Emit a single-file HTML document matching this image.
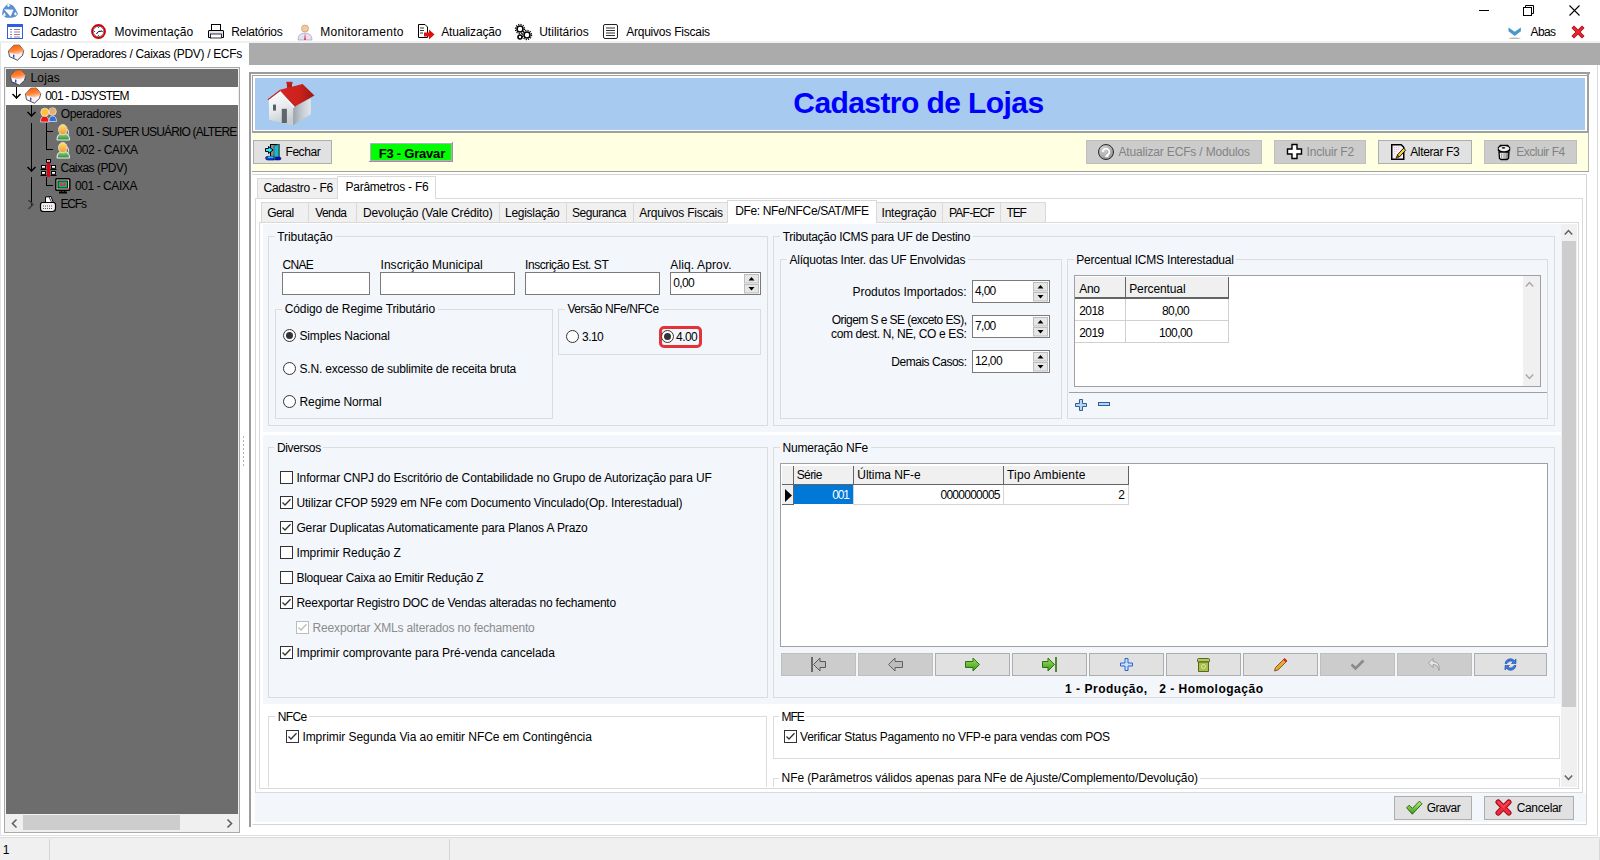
<!DOCTYPE html>
<html><head><meta charset="utf-8"><title>DJMonitor</title><style>
*{box-sizing:border-box}
html,body{margin:0;padding:0;width:1600px;height:860px;overflow:hidden;background:#fff;font-family:'Liberation Sans',sans-serif;font-size:12px;color:#000}
.a{position:absolute}
.t{position:absolute;white-space:pre;line-height:15px;font-size:12px;color:#000}
svg.a{overflow:visible}
</style></head><body>
<svg class="a" style="left:0px;top:0px" width="22" height="22" viewBox="0 0 22 22"><path d="M3 9 L6 5.5 L8 3.5 L13 5.5 L15.5 9 L18 14 L16 16.5 L12 17.8 L6 17.8 L2 14.5Z" fill="#5A90D2"/><path d="M4 9.2 L13.5 9.8 L10.5 16.5Z" fill="#fff"/><path d="M3 14.5 L4.5 12.5 L6 15.5 L3.5 16Z" fill="#fff"/><path d="M14 13.5 L15.5 12 L17 14.5 L15 15.5Z" fill="#fff"/><path d="M7 5 L8.5 3.2 L10 6 L8 7Z" fill="#fff"/></svg>
<div class="t" style="left:23.5px;top:5px;letter-spacing:0.035px;">DJMonitor</div>
<div class="a" style="left:1479px;top:10px;width:10px;height:1px;background:#000;"></div>
<svg class="a" style="left:1523px;top:5px" width="11" height="11" viewBox="0 0 11 11"><rect x="0.5" y="2.5" width="8" height="8" fill="none" stroke="#000"/><path d="M2.5 2.5 V0.5 H10.5 V8.5 H8.5" fill="none" stroke="#000"/></svg>
<svg class="a" style="left:1569px;top:5px" width="11" height="11" viewBox="0 0 11 11"><path d="M0.5 0.5 L10.5 10.5 M10.5 0.5 L0.5 10.5" stroke="#000" stroke-width="1.1"/></svg>
<svg class="a" style="left:7px;top:24px" width="16" height="15" viewBox="0 0 16 15"><rect x="0.5" y="0.5" width="15" height="14" fill="#fff" stroke="#2F5FE0"/><rect x="0.5" y="0.5" width="15" height="2.5" fill="#2F5FE0"/><path d="M3 5.5H5 M7 5.5H13 M3 8H5 M7 8H13 M3 10.5H5 M7 10.5H13 M3 13H5 M7 13H13" stroke="#8E7EA8" stroke-width="1"/></svg>
<div class="t" style="left:30.5px;top:25px;letter-spacing:-0.338px;">Cadastro</div>
<svg class="a" style="left:91px;top:24px" width="15" height="15" viewBox="0 0 15 15"><circle cx="7.5" cy="7.5" r="6.5" fill="#fff" stroke="#D40000" stroke-width="1.8"/><circle cx="7.5" cy="7.5" r="5.2" fill="none" stroke="#000" stroke-width="0.5"/><path d="M7.5 7.5 L11 7 M7.5 7.5 L5.5 10" stroke="#000" stroke-width="1"/><circle cx="7.5" cy="3.5" r="0.6" fill="#23F"/><circle cx="11.5" cy="7.5" r="0.6" fill="#23F"/><circle cx="3.5" cy="7.5" r="0.6" fill="#23F"/><circle cx="7.5" cy="11.5" r="0.6" fill="#23F"/></svg>
<div class="t" style="left:114.4px;top:25px;letter-spacing:0.079px;">Movimentação</div>
<svg class="a" style="left:208px;top:24px" width="16" height="15" viewBox="0 0 16 15"><rect x="3.5" y="0.5" width="9" height="6" fill="#fff" stroke="#000"/><path d="M1 6.5 H15 Q15.5 6.5 15.5 7 V13.5 H0.5 V7 Q0.5 6.5 1 6.5Z" fill="#E6E6F0" stroke="#000"/><rect x="2.5" y="10" width="11" height="4" fill="#fff" stroke="#000" stroke-width="0.8"/></svg>
<div class="t" style="left:231.2px;top:25px;letter-spacing:-0.273px;">Relatórios</div>
<svg class="a" style="left:297px;top:24px" width="16" height="16" viewBox="0 0 16 16"><circle cx="8" cy="4.5" r="3.5" fill="#F3C9A0" stroke="#B07850" stroke-width="0.5"/><path d="M1 16 Q1 9 8 9 Q15 9 15 16Z" fill="#E6E0F0" stroke="#A090B8" stroke-width="0.6"/><path d="M8 9 L7 16 L9 16Z" fill="#E04060"/></svg>
<div class="t" style="left:320.2px;top:25px;letter-spacing:0.266px;">Monitoramento</div>
<svg class="a" style="left:418px;top:24px" width="17" height="16" viewBox="0 0 17 16"><path d="M0.5 0.5 H7 L9.5 3 V13.5 H0.5Z" fill="#fff" stroke="#000"/><path d="M2 4H6 M2 6.5H6 M2 9H5" stroke="#000" stroke-width="0.8"/><path d="M6 8.5 H11 V5.5 L16.5 10.5 L11 15.5 V12.5 H6Z" fill="#E01010"/></svg>
<div class="t" style="left:441.2px;top:25px;letter-spacing:-0.186px;">Atualização</div>
<svg class="a" style="left:515px;top:24px" width="17" height="16" viewBox="0 0 17 16"><g fill="none" stroke="#000" stroke-width="1.6"><circle cx="5" cy="5" r="3"/><circle cx="12" cy="11" r="3"/><circle cx="5" cy="13" r="2"/></g><g stroke="#000" stroke-width="1.2" stroke-dasharray="1.2 1.2" fill="none"><circle cx="5" cy="5" r="4.6"/><circle cx="12" cy="11" r="4.6"/></g></svg>
<div class="t" style="left:539.2px;top:25px;letter-spacing:0.014px;">Utilitários</div>
<svg class="a" style="left:603px;top:24px" width="16" height="15" viewBox="0 0 16 15"><rect x="0.5" y="0.5" width="14" height="14" rx="1.5" fill="#fff" stroke="#222"/><path d="M3 4H12 M3 6.5H12 M3 9H12 M3 11.5H12" stroke="#333" stroke-width="1"/></svg>
<div class="t" style="left:626.2px;top:25px;letter-spacing:-0.229px;">Arquivos Fiscais</div>
<svg class="a" style="left:1508px;top:27px" width="14" height="13" viewBox="0 0 14 13"><path d="M0.5 0.5 L6.7 4.7 L12.9 0.5 V4.2 L6.7 9 L0.5 4.2Z" fill="#4898C8"/><ellipse cx="6.7" cy="11.3" rx="6" ry="0.8" fill="#B8B8B8"/></svg>
<div class="t" style="left:1530.5px;top:25px;letter-spacing:-0.590px;">Abas</div>
<svg class="a" style="left:1572px;top:26px" width="12" height="12" viewBox="0 0 12 12"><path d="M2 2 L10 10 M10 2 L2 10" stroke="#A00818" stroke-width="3.6" stroke-linecap="square"/><path d="M2 2 L10 10 M10 2 L2 10" stroke="#E82430" stroke-width="2.4" stroke-linecap="square"/></svg>
<div class="a" style="left:0px;top:41px;width:1600px;height:2px;background:#F0F0F0;"></div>
<div class="a" style="left:249px;top:43px;width:1351px;height:22px;background:#ABABAB;"></div>
<svg class="a" style="left:8px;top:44px" width="16" height="16" viewBox="0 0 16 16"><defs><linearGradient id="hr" x1="0.3" y1="0" x2="0.6" y2="1"><stop offset="0" stop-color="#FF5A00"/><stop offset="0.6" stop-color="#FF8A40"/><stop offset="1" stop-color="#FFD8C8"/></linearGradient></defs><path d="M0.5 7 L5.8 1.3 L11.4 1.1 L15.7 6.6 L14.5 11.4 L9.4 16.2 L1.5 12.6Z" fill="#FCF4FC" stroke="#3A3A3A" stroke-width="0.9"/><path d="M0.6 7 L5.8 1.4 L11.4 1.2 L15.6 6.6 L14.8 8.2 L10 10.5 L3.5 9.2 L1 8.2Z" fill="url(#hr)"/><rect x="5" y="10.6" width="1.4" height="3.2" rx="0.6" fill="#1A50D0"/></svg>
<div class="t" style="left:30.5px;top:47px;letter-spacing:-0.336px;">Lojas / Operadores / Caixas (PDV) / ECFs</div>
<div class="a" style="left:0px;top:43px;width:1px;height:793px;background:#E3E3E3;"></div>
<div class="a" style="left:4px;top:67px;width:236px;height:766px;background:#F0F0F0;border:1px solid #A8A8A8;"></div>
<div class="a" style="left:6px;top:69px;width:232px;height:745px;background:#6D6D6D;"></div>
<div class="a" style="left:6px;top:87px;width:232px;height:18px;background:#FFFFFF;"></div>
<div class="a" style="left:23px;top:815px;width:157px;height:15px;background:#CDCDCD;"></div>
<svg class="a" style="left:11px;top:819px" width="7" height="9" viewBox="0 0 7 9"><path d="M5.5 0.5 L1.5 4.5 L5.5 8.5" fill="none" stroke="#606060" stroke-width="1.6"/></svg>
<svg class="a" style="left:226px;top:819px" width="7" height="9" viewBox="0 0 7 9"><path d="M1.5 0.5 L5.5 4.5 L1.5 8.5" fill="none" stroke="#606060" stroke-width="1.6"/></svg>
<div class="a" style="left:243px;top:436px;width:1px;height:2px;background:#B0B0B0;"></div>
<div class="a" style="left:243px;top:440px;width:1px;height:2px;background:#B0B0B0;"></div>
<div class="a" style="left:243px;top:444px;width:1px;height:2px;background:#B0B0B0;"></div>
<div class="a" style="left:243px;top:448px;width:1px;height:2px;background:#B0B0B0;"></div>
<div class="a" style="left:243px;top:452px;width:1px;height:2px;background:#B0B0B0;"></div>
<div class="a" style="left:243px;top:456px;width:1px;height:2px;background:#B0B0B0;"></div>
<div class="a" style="left:243px;top:460px;width:1px;height:2px;background:#B0B0B0;"></div>
<div class="a" style="left:243px;top:464px;width:1px;height:2px;background:#B0B0B0;"></div>
<div class="a" style="left:16px;top:87px;width:1px;height:12px;background:#000;"></div>
<svg class="a" style="left:11px;top:87px" width="11" height="13" viewBox="0 0 11 13"><path d="M1.5 7 L5.5 11 L9.5 7" fill="none" stroke="#000" stroke-width="1.5"/></svg>
<div class="a" style="left:31px;top:105px;width:1px;height:12px;background:#000;"></div>
<svg class="a" style="left:26px;top:105px" width="11" height="13" viewBox="0 0 11 13"><path d="M1.5 7 L5.5 11 L9.5 7" fill="none" stroke="#000" stroke-width="1.5"/></svg>
<div class="a" style="left:31px;top:123px;width:1px;height:37px;background:#000;"></div>
<div class="a" style="left:31px;top:160px;width:1px;height:12px;background:#000;"></div>
<svg class="a" style="left:26px;top:160px" width="11" height="13" viewBox="0 0 11 13"><path d="M1.5 7 L5.5 11 L9.5 7" fill="none" stroke="#000" stroke-width="1.5"/></svg>
<div class="a" style="left:31px;top:177px;width:1px;height:29px;background:#000;"></div>
<svg class="a" style="left:27px;top:199px" width="8" height="11" viewBox="0 0 8 11"><path d="M1.5 1 L6 5.5 L1.5 10" fill="none" stroke="#3C3C3C" stroke-width="1.5"/></svg>
<div class="a" style="left:46px;top:123px;width:1px;height:27px;background:#000;"></div>
<div class="a" style="left:46px;top:131px;width:7px;height:1px;background:#000;"></div>
<div class="a" style="left:46px;top:149px;width:7px;height:1px;background:#000;"></div>
<div class="a" style="left:46px;top:177px;width:1px;height:9px;background:#000;"></div>
<div class="a" style="left:46px;top:185px;width:7px;height:1px;background:#000;"></div>
<svg class="a" style="left:10px;top:69px" width="16" height="16" viewBox="0 0 16 16"><defs><linearGradient id="hr" x1="0.3" y1="0" x2="0.6" y2="1"><stop offset="0" stop-color="#FF5A00"/><stop offset="0.6" stop-color="#FF8A40"/><stop offset="1" stop-color="#FFD8C8"/></linearGradient></defs><path d="M0.5 7 L5.8 1.3 L11.4 1.1 L15.7 6.6 L14.5 11.4 L9.4 16.2 L1.5 12.6Z" fill="#FCF4FC" stroke="#3A3A3A" stroke-width="0.9"/><path d="M0.6 7 L5.8 1.4 L11.4 1.2 L15.6 6.6 L14.8 8.2 L10 10.5 L3.5 9.2 L1 8.2Z" fill="url(#hr)"/><rect x="5" y="10.6" width="1.4" height="3.2" rx="0.6" fill="#1A50D0"/></svg>
<div class="t" style="left:30.5px;top:71px;letter-spacing:0.163px;">Lojas</div>
<svg class="a" style="left:25px;top:87px" width="16" height="16" viewBox="0 0 16 16"><defs><linearGradient id="hr" x1="0.3" y1="0" x2="0.6" y2="1"><stop offset="0" stop-color="#FF5A00"/><stop offset="0.6" stop-color="#FF8A40"/><stop offset="1" stop-color="#FFD8C8"/></linearGradient></defs><path d="M0.5 7 L5.8 1.3 L11.4 1.1 L15.7 6.6 L14.5 11.4 L9.4 16.2 L1.5 12.6Z" fill="#FCF4FC" stroke="#3A3A3A" stroke-width="0.9"/><path d="M0.6 7 L5.8 1.4 L11.4 1.2 L15.6 6.6 L14.8 8.2 L10 10.5 L3.5 9.2 L1 8.2Z" fill="url(#hr)"/><rect x="5" y="10.6" width="1.4" height="3.2" rx="0.6" fill="#1A50D0"/></svg>
<div class="t" style="left:45.2px;top:89px;letter-spacing:-0.800px;">001 - DJSYSTEM</div>
<svg class="a" style="left:40px;top:106px" width="17" height="16" viewBox="0 0 17 16"><path d="M9 15.5 Q9 10 12.5 10 Q16.5 10 16.5 15.5Z" fill="#3070E0" stroke="#fff" stroke-width="0.6"/><circle cx="12.5" cy="5.5" r="3.8" fill="#E8B070" stroke="#fff" stroke-width="0.6"/><path d="M9 4 Q12.5 0.5 16 4 L15 3 Q12.5 2 10 3.5Z" fill="#8A5A30"/><path d="M0.5 16 Q0.5 10 4.5 10 Q8.8 10 8.8 16Z" fill="#E81818" stroke="#fff" stroke-width="0.6"/><circle cx="4.8" cy="6.2" r="4" fill="#FFC040" stroke="#fff" stroke-width="0.6"/><path d="M1 4.8 Q4.8 1.2 8.6 4.8 Q4.8 3.2 1 4.8Z" fill="#F0D030"/></svg>
<div class="t" style="left:60.7px;top:107px;letter-spacing:-0.287px;">Operadores</div>
<svg class="a" style="left:56px;top:124px" width="15" height="17" viewBox="0 0 15 17"><defs><linearGradient id="uh" x1="0" y1="0" x2="0" y2="1"><stop offset="0" stop-color="#FFE070"/><stop offset="1" stop-color="#F09A30"/></linearGradient><linearGradient id="ub" x1="0" y1="0" x2="0" y2="1"><stop offset="0" stop-color="#9AD890"/><stop offset="1" stop-color="#2A8A30"/></linearGradient></defs><path d="M1 16 Q1 9.5 6 9.5 H8 Q13.5 9.5 13.5 16Z" fill="url(#ub)" stroke="#FFFFFF" stroke-width="0.9"/><ellipse cx="6.8" cy="5.6" rx="4.3" ry="5.2" fill="url(#uh)" stroke="#FFFFFF" stroke-width="0.6"/><path d="M11.5 5 Q13.5 8 12 11" fill="none" stroke="#FFFFFF" stroke-width="0.8"/></svg>
<div class="t" style="left:76.0px;top:125px;letter-spacing:-0.840px;width:162px;overflow:hidden;">001 - SUPER USUÁRIO (ALTERE</div>
<svg class="a" style="left:56px;top:142px" width="15" height="17" viewBox="0 0 15 17"><defs><linearGradient id="uh" x1="0" y1="0" x2="0" y2="1"><stop offset="0" stop-color="#FFE070"/><stop offset="1" stop-color="#F09A30"/></linearGradient><linearGradient id="ub" x1="0" y1="0" x2="0" y2="1"><stop offset="0" stop-color="#9AD890"/><stop offset="1" stop-color="#2A8A30"/></linearGradient></defs><path d="M1 16 Q1 9.5 6 9.5 H8 Q13.5 9.5 13.5 16Z" fill="url(#ub)" stroke="#FFFFFF" stroke-width="0.9"/><ellipse cx="6.8" cy="5.6" rx="4.3" ry="5.2" fill="url(#uh)" stroke="#FFFFFF" stroke-width="0.6"/><path d="M11.5 5 Q13.5 8 12 11" fill="none" stroke="#FFFFFF" stroke-width="0.8"/></svg>
<div class="t" style="left:75.5px;top:143px;letter-spacing:-0.409px;">002 - CAIXA</div>
<svg class="a" style="left:40px;top:159px" width="17" height="19" viewBox="0 0 17 19"><rect x="7" y="4" width="3" height="14" fill="#E00010"/><path d="M5.5 7 L8.5 3.5 L11.5 7Z" fill="#E00010"/><g fill="#fff" stroke="#000" stroke-width="1"><rect x="6.5" y="0.5" width="4" height="2.8"/><rect x="1.5" y="6.5" width="4" height="2.8"/><rect x="11.5" y="6.5" width="4" height="2.8"/><rect x="1.5" y="12.5" width="4" height="2.8"/><rect x="11.5" y="12.5" width="4" height="2.8"/></g><path d="M0.5 10.5 H6.5 M10.5 10.5 H16.5 M0.5 16.5 H6.5 M10.5 16.5 H16.5" stroke="#000" stroke-width="1.2"/><rect x="7.5" y="1.2" width="2" height="1.4" fill="#D060C0"/></svg>
<div class="t" style="left:60.5px;top:161px;letter-spacing:-0.516px;">Caixas (PDV)</div>
<svg class="a" style="left:55px;top:178px" width="16" height="17" viewBox="0 0 16 17"><rect x="0.8" y="0.8" width="14" height="11.5" rx="1" fill="#D0D0D0" stroke="#000" stroke-width="1.4"/><rect x="3" y="3" width="9.5" height="7" fill="#10C040" stroke="#000" stroke-width="0.8"/><rect x="5" y="4.5" width="5.5" height="3.5" fill="#E020A0"/><rect x="6.5" y="5" width="2.5" height="1.5" fill="#10C040"/><rect x="12.5" y="10.5" width="1.5" height="1" fill="#F00"/><path d="M4 14.5 H12" stroke="#000" stroke-width="2"/><path d="M6.5 12.5 V14 M9.5 12.5 V14" stroke="#000" stroke-width="1"/></svg>
<div class="t" style="left:75.0px;top:179px;letter-spacing:-0.428px;">001 - CAIXA</div>
<svg class="a" style="left:40px;top:196px" width="16" height="16" viewBox="0 0 16 16"><path d="M5.5 7 L5.5 1 L11 0.5 L13.5 7Z" fill="#fff" stroke="#000" stroke-width="1"/><path d="M9 1 L12 7" stroke="#000" stroke-width="0.8"/><path d="M2.5 6.5 H13.5 Q15.5 6.5 15.5 9 V12.5 Q15.5 15.5 12.5 15.5 H3.5 Q0.5 15.5 0.5 12.5 V9 Q0.5 6.5 2.5 6.5Z" fill="#F4EEF4" stroke="#000" stroke-width="1.2"/><path d="M3 10 H13 M3 12.5 H13" stroke="#555" stroke-width="1" stroke-dasharray="1 1"/></svg>
<div class="t" style="left:60.5px;top:197px;letter-spacing:-1.200px;">ECFs</div>
<div class="a" style="left:0px;top:837px;width:1600px;height:1px;background:#DADADA;"></div>
<div class="a" style="left:0px;top:838px;width:1600px;height:22px;background:#F0F0F0;"></div>
<div class="a" style="left:1599px;top:839px;width:1px;height:21px;background:#D8D8D8;"></div>
<div class="a" style="left:49px;top:839px;width:1px;height:21px;background:#D5D5D5;"></div>
<div class="a" style="left:449px;top:839px;width:1px;height:21px;background:#D5D5D5;"></div>
<div class="t" style="left:2.8px;top:843px;letter-spacing:-0.188px;">1</div>
<div class="a" style="left:249px;top:72px;width:1341px;height:755px;background:#FFFFFF;"></div>
<div class="a" style="left:249px;top:72px;width:1341px;height:2px;background:#9C9C9C;"></div>
<div class="a" style="left:249px;top:72px;width:2px;height:755px;background:#9C9C9C;"></div>
<div class="a" style="left:1597px;top:65px;width:1px;height:771px;background:#DADADA;"></div>
<div class="a" style="left:0px;top:835px;width:1598px;height:1px;background:#E0E0E0;"></div>
<div class="a" style="left:252px;top:75px;width:1337px;height:1px;background:#A0A0A0;"></div>
<div class="a" style="left:252px;top:75px;width:1px;height:57px;background:#A0A0A0;"></div>
<div class="a" style="left:1587px;top:72px;width:2px;height:61px;background:#A0A0A0;"></div>
<div class="a" style="left:255px;top:78px;width:1330px;height:52px;background:#A6CAF0;"></div>
<div class="a" style="left:252px;top:131px;width:1337px;height:2px;background:#A0A0A0;"></div>
<svg class="a" style="left:260px;top:78px" width="65" height="52" viewBox="0 0 65 52"><defs><linearGradient id="hw" x1="0" y1="0" x2="0.3" y2="1"><stop offset="0" stop-color="#FFFFFF"/><stop offset="0.6" stop-color="#E8EAEC"/><stop offset="1" stop-color="#C9CDD1"/></linearGradient><linearGradient id="hs" x1="0" y1="0" x2="1" y2="0"><stop offset="0" stop-color="#9AA3AB"/><stop offset="0.5" stop-color="#C5CBD0"/><stop offset="1" stop-color="#E2E6E9"/></linearGradient><linearGradient id="hroof" x1="0" y1="0" x2="1" y2="0"><stop offset="0" stop-color="#D82420"/><stop offset="0.55" stop-color="#CC221C"/><stop offset="1" stop-color="#9C1814"/></linearGradient></defs><path d="M8.8 21.2 L20.3 12.7 L33.3 29 L33 47.2 L9.1 41.7Z" fill="url(#hw)"/><path d="M33.3 29 L50.8 20.6 L50.8 36.3 L33 47.2Z" fill="url(#hs)"/><rect x="26.9" y="3.9" width="5.1" height="6" fill="#B81C18"/><rect x="26.3" y="3.9" width="6.3" height="1.6" fill="#C82420"/><path d="M20 11.8 L42.6 6 L54.4 17.5 L35 28.4Z" fill="url(#hroof)"/><path d="M20 11.8 L7.3 21.5 L8.8 22 L20.3 13.2 L35 28.4 L35.5 28Z" fill="#C81E1A"/><path d="M20.3 13.2 L9 21.8 L9.3 23 L20.4 14.8 L33.6 30 L34.6 29Z" fill="#FFFFFF" opacity="0.85"/><rect x="13" y="26.6" width="3" height="6" fill="#5A6066"/><rect x="21.8" y="30.8" width="5.1" height="14.2" fill="#5E656B"/></svg>
<div class="t" style="left:793.3px;top:84px;font-size:30px;line-height:38px;font-weight:bold;color:#0000FF;letter-spacing:-0.581px;">Cadastro de Lojas</div>
<div class="a" style="left:253px;top:133px;width:1335px;height:38px;background:#FFFFE1;"></div>
<div class="a" style="left:1588px;top:133px;width:1px;height:39px;background:#B4B4B4;"></div>
<div class="a" style="left:252px;top:171px;width:1337px;height:1px;background:#A0A0A0;"></div>
<div class="a" style="left:253px;top:140px;width:79px;height:24px;background:#E1E1E1;border:1px solid #ADADAD;"></div>
<svg class="a" style="left:265px;top:144px" width="16" height="16" viewBox="0 0 16 16"><rect x="5.5" y="0.5" width="8.5" height="13.5" fill="#8E8A94" stroke="#000" stroke-width="1"/><path d="M9 2 L13.8 0.3 V14.5 L9 16Z" fill="#22B4C4" stroke="#0A5A60" stroke-width="0.7"/><path d="M0.5 4.5 H3.5 V2.5 L8 6 L3.5 9.5 V7.5 H0.5Z" fill="#10F0FF" stroke="#000" stroke-width="1"/><path d="M0.5 14 Q0.5 12.3 3 12.3 H9 V16 H3 Q0.5 16 0.5 14Z" fill="#1040F0" stroke="#000" stroke-width="0.6"/><path d="M3 12.5 H8.5 V13.8 H3Z" fill="#20E0FF"/><path d="M10.5 13 H14 Q16 13 16 14.5 Q16 16 14 16 H10.5Z" fill="#0010E0" stroke="#000" stroke-width="0.5"/></svg>
<div class="t" style="left:285.5px;top:145px;letter-spacing:-0.443px;">Fechar</div>
<div class="a" style="left:369px;top:142px;width:84px;height:20px;background:#9A929A;"></div>
<div class="a" style="left:369px;top:142px;width:83px;height:19px;background:#FFFFFF;"></div>
<div class="a" style="left:370px;top:143px;width:82px;height:18px;background:#B8AAB8;"></div>
<div class="a" style="left:371px;top:144px;width:80px;height:16px;background:#00FF00;"></div>
<div class="t" style="left:378.7px;top:146px;font-size:13px;line-height:16px;font-weight:bold;letter-spacing:-0.214px;">F3 - Gravar</div>
<div class="a" style="left:1086px;top:140px;width:176px;height:24px;background:#CCCCCC;border:1px solid #BFBFBF;"></div>
<svg class="a" style="left:1098px;top:144px" width="16" height="16" viewBox="0 0 16 16"><defs><radialGradient id="rg" cx="0.35" cy="0.3" r="0.8"><stop offset="0" stop-color="#D8D8D8"/><stop offset="1" stop-color="#8E8E8E"/></radialGradient></defs><circle cx="8" cy="8" r="7.5" fill="url(#rg)" stroke="#2A2A2A" stroke-width="1"/><path d="M4.8 8 A3.3 3.3 0 1 1 9.5 11" fill="none" stroke="#fff" stroke-width="1.6"/><path d="M10.2 9 L6.5 12.5 L10.5 13.5Z" fill="#fff"/></svg>
<div class="t" style="left:1118.5px;top:145px;color:#838383;letter-spacing:-0.170px;">Atualizar ECFs / Modulos</div>
<div class="a" style="left:1274px;top:140px;width:92px;height:24px;background:#CCCCCC;border:1px solid #BFBFBF;"></div>
<svg class="a" style="left:1287px;top:144px" width="15" height="15" viewBox="0 0 15 15"><path d="M5 0.5 H10 V5 H14.5 V10 H10 V14.5 H5 V10 H0.5 V5 H5Z" fill="#fff" stroke="#000" stroke-width="1.4"/></svg>
<div class="t" style="left:1306.5px;top:145px;color:#838383;letter-spacing:-0.186px;">Incluir F2</div>
<div class="a" style="left:1378px;top:140px;width:94px;height:24px;background:#E1E1E1;border:1px solid #ADADAD;"></div>
<svg class="a" style="left:1391px;top:144px" width="16" height="16" viewBox="0 0 16 16"><path d="M0.75 0.75 H10.2 L12.75 3.3 V15.25 H0.75Z" fill="#F8EEF8" stroke="#000" stroke-width="1.5"/><path d="M3 3.5 H8 M3 5.5 H8 M3 7.5 H7 M3 9.5 H5" stroke="#C8C0C8" stroke-width="0.8" stroke-dasharray="1 1"/><path d="M6.3 11 L12.6 4.2 L14.6 6.2 L8.3 13Z" fill="#F8D830" stroke="#000" stroke-width="0.9"/><path d="M6.3 11 L5 14.2 L8.3 13Z" fill="#B07020" stroke="#000" stroke-width="0.6"/></svg>
<div class="t" style="left:1410.2px;top:145px;letter-spacing:-0.349px;">Alterar F3</div>
<div class="a" style="left:1484px;top:140px;width:93px;height:24px;background:#CCCCCC;border:1px solid #BFBFBF;"></div>
<svg class="a" style="left:1497px;top:144px" width="14" height="16" viewBox="0 0 14 16"><defs><linearGradient id="tg" x1="0" y1="0" x2="1" y2="0"><stop offset="0" stop-color="#F4F4F4"/><stop offset="0.5" stop-color="#D8D8D8"/><stop offset="1" stop-color="#707070"/></linearGradient></defs><path d="M2 8 L2.5 14.5 L4 15.5 H10 L11.5 14.5 L12 8Z" fill="url(#tg)" stroke="#000" stroke-width="1.3"/><path d="M4.5 9.5 V14 M7 9.5 V14.5 M9.5 9.5 V14" stroke="#8A8A8A" stroke-width="0.8"/><path d="M0.8 3.5 L3 0.8 H11 L13.2 3.5 V6.8 L11 8 H3 L0.8 6.8Z" fill="#000"/><ellipse cx="7" cy="4.6" rx="5.3" ry="2.6" fill="#EDEDED"/><ellipse cx="6.5" cy="3.8" rx="1.8" ry="0.9" fill="#222"/></svg>
<div class="t" style="left:1516.3px;top:145px;color:#838383;letter-spacing:-0.494px;">Excluir F4</div>
<div class="a" style="left:252px;top:174px;width:1335px;height:651px;background:#FFFFFF;border:1px solid #D4D4D4;border-left-color:#FFFFFF;"></div>
<div class="a" style="left:255px;top:198px;width:1328px;height:595px;background:#FFFFFF;border:1px solid #D9D9D9;"></div>
<div class="a" style="left:257px;top:178px;width:81px;height:21px;background:#F0F0F0;border:1px solid #D9D9D9;"></div>
<div class="a" style="left:337px;top:176px;width:99px;height:23px;background:#FFFFFF;border:1px solid #D9D9D9;border-bottom:none;"></div>
<div class="t" style="left:263.6px;top:181px;letter-spacing:-0.312px;">Cadastro - F6</div>
<div class="t" style="left:345.5px;top:180px;letter-spacing:-0.254px;">Parâmetros - F6</div>
<div class="a" style="left:259px;top:222px;width:1320px;height:567px;background:#FFFFFF;border:1px solid #D9D9D9;"></div>
<div class="a" style="left:261px;top:202px;width:48px;height:21px;background:#F0F0F0;border:1px solid #D9D9D9;"></div>
<div class="t" style="left:267.3px;top:206px;letter-spacing:-0.649px;">Geral</div>
<div class="a" style="left:308px;top:202px;width:49px;height:21px;background:#F0F0F0;border:1px solid #D9D9D9;"></div>
<div class="t" style="left:315.2px;top:206px;letter-spacing:-0.569px;">Venda</div>
<div class="a" style="left:356px;top:202px;width:144px;height:21px;background:#F0F0F0;border:1px solid #D9D9D9;"></div>
<div class="t" style="left:363.0px;top:206px;letter-spacing:-0.153px;">Devolução (Vale Crédito)</div>
<div class="a" style="left:499px;top:202px;width:68px;height:21px;background:#F0F0F0;border:1px solid #D9D9D9;"></div>
<div class="t" style="left:505.0px;top:206px;letter-spacing:-0.287px;">Legislação</div>
<div class="a" style="left:566px;top:202px;width:68px;height:21px;background:#F0F0F0;border:1px solid #D9D9D9;"></div>
<div class="t" style="left:572.0px;top:206px;letter-spacing:-0.450px;">Seguranca</div>
<div class="a" style="left:633px;top:202px;width:96px;height:21px;background:#F0F0F0;border:1px solid #D9D9D9;"></div>
<div class="t" style="left:639.3px;top:206px;letter-spacing:-0.241px;">Arquivos Fiscais</div>
<div class="a" style="left:876px;top:202px;width:67px;height:21px;background:#F0F0F0;border:1px solid #D9D9D9;"></div>
<div class="t" style="left:881.5px;top:206px;letter-spacing:-0.192px;">Integração</div>
<div class="a" style="left:942px;top:202px;width:59px;height:21px;background:#F0F0F0;border:1px solid #D9D9D9;"></div>
<div class="t" style="left:949.0px;top:206px;letter-spacing:-0.765px;">PAF-ECF</div>
<div class="a" style="left:1000px;top:202px;width:46px;height:21px;background:#F0F0F0;border:1px solid #D9D9D9;"></div>
<div class="t" style="left:1006.5px;top:206px;letter-spacing:-1.200px;">TEF</div>
<div class="a" style="left:727px;top:200px;width:150px;height:23px;background:#FFFFFF;border:1px solid #D9D9D9;border-bottom:none;"></div>
<div class="t" style="left:735.3px;top:204px;letter-spacing:-0.368px;">DFe: NFe/NFCe/SAT/MFE</div>
<div class="a" style="left:263px;top:224px;width:1298px;height:480px;background:#F3F6FB;"></div>
<div class="a" style="left:263px;top:704px;width:1298px;height:83px;background:#FFFFFF;"></div>
<div class="a" style="left:263px;top:432px;width:1298px;height:3px;background:#FFFFFF;"></div>
<div class="a" style="left:1561px;top:224px;width:16px;height:563px;background:#F0F0F0;"></div>
<div class="a" style="left:1562px;top:241px;width:14px;height:466px;background:#CDCDCD;"></div>
<svg class="a" style="left:1564px;top:229px" width="9" height="7" viewBox="0 0 9 7"><path d="M0.8 5.5 L4.5 1.5 L8.2 5.5" fill="none" stroke="#606060" stroke-width="1.5"/></svg>
<svg class="a" style="left:1564px;top:774px" width="9" height="7" viewBox="0 0 9 7"><path d="M0.8 1.5 L4.5 5.5 L8.2 1.5" fill="none" stroke="#606060" stroke-width="1.5"/></svg>
<div class="a" style="left:268px;top:236px;width:500px;height:190px;border:1px solid #DCDCDC;"></div>
<div class="a" style="left:275px;top:233px;width:60px;height:7px;background:#F3F6FB;"></div>
<div class="t" style="left:277.3px;top:230px;letter-spacing:-0.085px;">Tributação</div>
<div class="t" style="left:282.4px;top:258px;letter-spacing:-0.661px;">CNAE</div>
<div class="a" style="left:282px;top:272px;width:88px;height:23px;background:#FFFFFF;border:1px solid #7A7A7A;"></div>
<div class="t" style="left:380.6px;top:258px;letter-spacing:0.008px;">Inscrição Municipal</div>
<div class="a" style="left:380px;top:272px;width:135px;height:23px;background:#FFFFFF;border:1px solid #7A7A7A;"></div>
<div class="t" style="left:525.1px;top:258px;letter-spacing:-0.441px;">Inscrição Est. ST</div>
<div class="a" style="left:525px;top:272px;width:135px;height:23px;background:#FFFFFF;border:1px solid #7A7A7A;"></div>
<div class="t" style="left:670.3px;top:258px;letter-spacing:0.124px;">Aliq. Aprov.</div>
<div class="a" style="left:670px;top:272px;width:91px;height:23px;background:#FFFFFF;border:1px solid #7A7A7A;"></div>
<svg class="a" style="left:744px;top:274px" width="15" height="20" viewBox="0 0 15 20"><rect x="0.5" y="0.5" width="14" height="8.5" fill="#E6E6E6" stroke="#BDBDBD"/><rect x="0.5" y="10.5" width="14" height="8.5" fill="#E6E6E6" stroke="#BDBDBD"/><path d="M4.5 6.5 L7.5 3 L10.5 6.5Z" fill="#000"/><path d="M4.5 13 L7.5 16.5 L10.5 13Z" fill="#000"/></svg>
<div class="t" style="left:673.3px;top:276px;letter-spacing:-0.690px;">0,00</div>
<div class="a" style="left:275px;top:309px;width:278px;height:110px;border:1px solid #DCDCDC;"></div>
<div class="a" style="left:282px;top:306px;width:156px;height:7px;background:#F3F6FB;"></div>
<div class="t" style="left:284.7px;top:302px;letter-spacing:-0.091px;">Código de Regime Tributário</div>
<svg class="a" style="left:283px;top:329px" width="13" height="13" viewBox="0 0 13 13"><circle cx="6.5" cy="6.5" r="6" fill="#fff" stroke="#333" stroke-width="1"/><circle cx="6.5" cy="6.5" r="3.5" fill="#333"/></svg>
<div class="t" style="left:299.5px;top:329px;letter-spacing:-0.157px;">Simples Nacional</div>
<svg class="a" style="left:283px;top:362px" width="13" height="13" viewBox="0 0 13 13"><circle cx="6.5" cy="6.5" r="6" fill="#fff" stroke="#333" stroke-width="1"/></svg>
<div class="t" style="left:299.5px;top:362px;letter-spacing:-0.197px;">S.N. excesso de sublimite de receita bruta</div>
<svg class="a" style="left:283px;top:395px" width="13" height="13" viewBox="0 0 13 13"><circle cx="6.5" cy="6.5" r="6" fill="#fff" stroke="#333" stroke-width="1"/></svg>
<div class="t" style="left:299.5px;top:395px;letter-spacing:-0.105px;">Regime Normal</div>
<div class="a" style="left:558px;top:309px;width:203px;height:46px;border:1px solid #DCDCDC;"></div>
<div class="a" style="left:565px;top:306px;width:96px;height:7px;background:#F3F6FB;"></div>
<div class="t" style="left:567.4px;top:302px;letter-spacing:-0.443px;">Versão NFe/NFCe</div>
<svg class="a" style="left:566px;top:330px" width="13" height="13" viewBox="0 0 13 13"><circle cx="6.5" cy="6.5" r="6" fill="#fff" stroke="#333" stroke-width="1"/></svg>
<div class="t" style="left:582.1px;top:330px;letter-spacing:-0.590px;">3.10</div>
<div class="a" style="left:659px;top:326px;width:43px;height:22px;border:3px solid #E53238;border-radius:5px;"></div>
<svg class="a" style="left:661px;top:330px" width="13" height="13" viewBox="0 0 13 13"><circle cx="6.5" cy="6.5" r="6" fill="#fff" stroke="#333" stroke-width="1"/><circle cx="6.5" cy="6.5" r="3.5" fill="#333"/></svg>
<div class="t" style="left:676.1px;top:330px;letter-spacing:-0.590px;">4.00</div>
<div class="a" style="left:773px;top:236px;width:782px;height:190px;border:1px solid #DCDCDC;"></div>
<div class="a" style="left:780px;top:233px;width:193px;height:7px;background:#F3F6FB;"></div>
<div class="t" style="left:782.7px;top:230px;letter-spacing:-0.281px;">Tributação ICMS para UF de Destino</div>
<div class="a" style="left:780px;top:259px;width:282px;height:160px;border:1px solid #DCDCDC;"></div>
<div class="a" style="left:787px;top:256px;width:181px;height:7px;background:#F3F6FB;"></div>
<div class="t" style="left:789.5px;top:253px;letter-spacing:-0.225px;">Alíquotas Inter. das UF Envolvidas</div>
<div class="t" style="left:852.5px;top:285px;letter-spacing:-0.037px;">Produtos Importados:</div>
<div class="a" style="left:972px;top:280px;width:78px;height:23px;background:#FFFFFF;border:1px solid #7A7A7A;"></div>
<svg class="a" style="left:1033px;top:282px" width="15" height="20" viewBox="0 0 15 20"><rect x="0.5" y="0.5" width="14" height="8.5" fill="#E6E6E6" stroke="#BDBDBD"/><rect x="0.5" y="10.5" width="14" height="8.5" fill="#E6E6E6" stroke="#BDBDBD"/><path d="M4.5 6.5 L7.5 3 L10.5 6.5Z" fill="#000"/><path d="M4.5 13 L7.5 16.5 L10.5 13Z" fill="#000"/></svg>
<div class="t" style="left:975.0px;top:284px;letter-spacing:-0.690px;">4,00</div>
<div class="t" style="left:831.8px;top:313px;letter-spacing:-0.565px;">Origem S e SE (exceto ES),</div>
<div class="t" style="left:831.0px;top:327px;letter-spacing:-0.369px;">com dest. N, NE, CO e ES:</div>
<div class="a" style="left:972px;top:315px;width:78px;height:23px;background:#FFFFFF;border:1px solid #7A7A7A;"></div>
<svg class="a" style="left:1033px;top:317px" width="15" height="20" viewBox="0 0 15 20"><rect x="0.5" y="0.5" width="14" height="8.5" fill="#E6E6E6" stroke="#BDBDBD"/><rect x="0.5" y="10.5" width="14" height="8.5" fill="#E6E6E6" stroke="#BDBDBD"/><path d="M4.5 6.5 L7.5 3 L10.5 6.5Z" fill="#000"/><path d="M4.5 13 L7.5 16.5 L10.5 13Z" fill="#000"/></svg>
<div class="t" style="left:975.0px;top:319px;letter-spacing:-0.690px;">7,00</div>
<div class="t" style="left:891.3px;top:355px;letter-spacing:-0.474px;">Demais Casos:</div>
<div class="a" style="left:972px;top:350px;width:78px;height:23px;background:#FFFFFF;border:1px solid #7A7A7A;"></div>
<svg class="a" style="left:1033px;top:352px" width="15" height="20" viewBox="0 0 15 20"><rect x="0.5" y="0.5" width="14" height="8.5" fill="#E6E6E6" stroke="#BDBDBD"/><rect x="0.5" y="10.5" width="14" height="8.5" fill="#E6E6E6" stroke="#BDBDBD"/><path d="M4.5 6.5 L7.5 3 L10.5 6.5Z" fill="#000"/><path d="M4.5 13 L7.5 16.5 L10.5 13Z" fill="#000"/></svg>
<div class="t" style="left:975.0px;top:354px;letter-spacing:-0.606px;">12,00</div>
<div class="a" style="left:1067px;top:259px;width:481px;height:160px;border:1px solid #DCDCDC;"></div>
<div class="a" style="left:1074px;top:256px;width:162px;height:7px;background:#F3F6FB;"></div>
<div class="t" style="left:1076.2px;top:253px;letter-spacing:-0.201px;">Percentual ICMS Interestadual</div>
<div class="a" style="left:1074px;top:275px;width:467px;height:112px;background:#FFFFFF;border:1px solid #A0A0A0;"></div>
<div class="a" style="left:1523px;top:276px;width:17px;height:110px;background:#F0F0F0;"></div>
<svg class="a" style="left:1525px;top:281px" width="9" height="7" viewBox="0 0 9 7"><path d="M0.8 5.5 L4.5 1.5 L8.2 5.5" fill="none" stroke="#A6A6A6" stroke-width="1.3"/></svg>
<svg class="a" style="left:1525px;top:373px" width="9" height="7" viewBox="0 0 9 7"><path d="M0.8 1.5 L4.5 5.5 L8.2 1.5" fill="none" stroke="#A6A6A6" stroke-width="1.3"/></svg>
<div class="a" style="left:1075px;top:277px;width:154px;height:21px;background:#F0F0F0;"></div>
<div class="a" style="left:1075px;top:297px;width:154px;height:2px;background:#646464;"></div>
<div class="a" style="left:1125px;top:277px;width:1px;height:22px;background:#646464;"></div>
<div class="a" style="left:1228px;top:277px;width:1px;height:22px;background:#646464;"></div>
<div class="t" style="left:1079.2px;top:282px;letter-spacing:-0.286px;">Ano</div>
<div class="t" style="left:1129.2px;top:282px;letter-spacing:-0.108px;">Percentual</div>
<div class="a" style="left:1075px;top:320px;width:154px;height:1px;background:#D0D0D0;"></div>
<div class="a" style="left:1075px;top:342px;width:154px;height:1px;background:#D0D0D0;"></div>
<div class="a" style="left:1125px;top:299px;width:1px;height:44px;background:#D0D0D0;"></div>
<div class="a" style="left:1228px;top:299px;width:1px;height:44px;background:#D0D0D0;"></div>
<div class="t" style="left:1079.2px;top:304px;letter-spacing:-0.551px;">2018</div>
<div class="t" style="left:1162.0px;top:304px;letter-spacing:-0.606px;">80,00</div>
<div class="t" style="left:1079.2px;top:326px;letter-spacing:-0.551px;">2019</div>
<div class="t" style="left:1159.0px;top:326px;letter-spacing:-0.617px;">100,00</div>
<div class="a" style="left:1069px;top:392px;width:478px;height:1px;background:#A0A0A0;"></div>
<svg class="a" style="left:1075px;top:399px" width="13" height="13" viewBox="0 0 13 13"><path d="M4.5 0.5 H7.5 V4.5 H11.5 V7.5 H7.5 V11.5 H4.5 V7.5 H0.5 V4.5 H4.5Z" fill="#B8D4F0" stroke="#2C5E9E" stroke-width="1"/></svg>
<svg class="a" style="left:1098px;top:402px" width="13" height="5" viewBox="0 0 13 5"><rect x="0.5" y="0.5" width="11" height="3" fill="#B8D4F0" stroke="#2C5E9E" stroke-width="1"/></svg>
<div class="a" style="left:268px;top:447px;width:500px;height:251px;border:1px solid #DCDCDC;"></div>
<div class="a" style="left:274px;top:444px;width:49px;height:7px;background:#F3F6FB;"></div>
<div class="t" style="left:276.9px;top:441px;letter-spacing:-0.348px;">Diversos</div>
<svg class="a" style="left:280px;top:471px" width="13" height="13" viewBox="0 0 13 13"><rect x="0.5" y="0.5" width="12" height="12" fill="#fff" stroke="#333333"/></svg>
<div class="t" style="left:296.4px;top:471px;letter-spacing:-0.135px;">Informar CNPJ do Escritório de Contabilidade no Grupo de Autorização para UF</div>
<svg class="a" style="left:280px;top:496px" width="13" height="13" viewBox="0 0 13 13"><rect x="0.5" y="0.5" width="12" height="12" fill="#fff" stroke="#333333"/><path d="M2.5 6.5 L5 9 L10.5 3.2" fill="none" stroke="#333333" stroke-width="1.3"/></svg>
<div class="t" style="left:296.4px;top:496px;letter-spacing:-0.143px;">Utilizar CFOP 5929 em NFe com Documento Vinculado(Op. Interestadual)</div>
<svg class="a" style="left:280px;top:521px" width="13" height="13" viewBox="0 0 13 13"><rect x="0.5" y="0.5" width="12" height="12" fill="#fff" stroke="#333333"/><path d="M2.5 6.5 L5 9 L10.5 3.2" fill="none" stroke="#333333" stroke-width="1.3"/></svg>
<div class="t" style="left:296.4px;top:521px;letter-spacing:-0.134px;">Gerar Duplicatas Automaticamente para Planos A Prazo</div>
<svg class="a" style="left:280px;top:546px" width="13" height="13" viewBox="0 0 13 13"><rect x="0.5" y="0.5" width="12" height="12" fill="#fff" stroke="#333333"/></svg>
<div class="t" style="left:296.4px;top:546px;letter-spacing:-0.059px;">Imprimir Redução Z</div>
<svg class="a" style="left:280px;top:571px" width="13" height="13" viewBox="0 0 13 13"><rect x="0.5" y="0.5" width="12" height="12" fill="#fff" stroke="#333333"/></svg>
<div class="t" style="left:296.4px;top:571px;letter-spacing:-0.231px;">Bloquear Caixa ao Emitir Redução Z</div>
<svg class="a" style="left:280px;top:596px" width="13" height="13" viewBox="0 0 13 13"><rect x="0.5" y="0.5" width="12" height="12" fill="#fff" stroke="#333333"/><path d="M2.5 6.5 L5 9 L10.5 3.2" fill="none" stroke="#333333" stroke-width="1.3"/></svg>
<div class="t" style="left:296.4px;top:596px;letter-spacing:-0.234px;">Reexportar Registro DOC de Vendas alteradas no fechamento</div>
<svg class="a" style="left:296px;top:621px" width="13" height="13" viewBox="0 0 13 13"><rect x="0.5" y="0.5" width="12" height="12" fill="#fff" stroke="#BCBCBC"/><path d="M2.5 6.5 L5 9 L10.5 3.2" fill="none" stroke="#BCBCBC" stroke-width="1.3"/></svg>
<div class="t" style="left:312.6px;top:621px;color:#8C8C8C;letter-spacing:-0.174px;">Reexportar XMLs alterados no fechamento</div>
<svg class="a" style="left:280px;top:646px" width="13" height="13" viewBox="0 0 13 13"><rect x="0.5" y="0.5" width="12" height="12" fill="#fff" stroke="#333333"/><path d="M2.5 6.5 L5 9 L10.5 3.2" fill="none" stroke="#333333" stroke-width="1.3"/></svg>
<div class="t" style="left:296.4px;top:646px;letter-spacing:-0.038px;">Imprimir comprovante para Pré-venda cancelada</div>
<div class="a" style="left:773px;top:447px;width:782px;height:251px;border:1px solid #DCDCDC;"></div>
<div class="a" style="left:780px;top:444px;width:91px;height:7px;background:#F3F6FB;"></div>
<div class="t" style="left:782.6px;top:441px;letter-spacing:-0.202px;">Numeração NFe</div>
<div class="a" style="left:780px;top:463px;width:768px;height:184px;background:#FFFFFF;border:1px solid #A0A0A0;"></div>
<div class="a" style="left:782px;top:466px;width:347px;height:18px;background:#F0F0F0;"></div>
<div class="a" style="left:782px;top:484px;width:347px;height:1px;background:#646464;"></div>
<div class="a" style="left:793px;top:466px;width:1px;height:19px;background:#646464;"></div>
<div class="a" style="left:853px;top:466px;width:1px;height:19px;background:#646464;"></div>
<div class="a" style="left:1003px;top:466px;width:1px;height:19px;background:#646464;"></div>
<div class="a" style="left:1128px;top:466px;width:1px;height:19px;background:#646464;"></div>
<div class="t" style="left:796.7px;top:468px;letter-spacing:-0.583px;">Série</div>
<div class="t" style="left:857.3px;top:468px;letter-spacing:-0.056px;">Última NF-e</div>
<div class="t" style="left:1007.0px;top:468px;letter-spacing:0.172px;">Tipo Ambiente</div>
<div class="a" style="left:782px;top:485px;width:11px;height:19px;background:#F0F0F0;"></div>
<div class="a" style="left:782px;top:504px;width:12px;height:1px;background:#646464;"></div>
<div class="a" style="left:793px;top:485px;width:1px;height:20px;background:#646464;"></div>
<div class="a" style="left:794px;top:485px;width:59px;height:19px;background:#0078D7;"></div>
<svg class="a" style="left:785px;top:489px" width="8" height="13" viewBox="0 0 8 13"><path d="M0 0 L7 6.5 L0 13Z" fill="#000"/></svg>
<div class="a" style="left:853px;top:504px;width:276px;height:1px;background:#D4D4D4;"></div>
<div class="a" style="left:853px;top:485px;width:1px;height:20px;background:#D4D4D4;"></div>
<div class="a" style="left:1003px;top:485px;width:1px;height:20px;background:#D4D4D4;"></div>
<div class="a" style="left:1128px;top:485px;width:1px;height:20px;background:#D4D4D4;"></div>
<div class="t" style="left:832.2px;top:488px;color:#FFFFFF;letter-spacing:-1.200px;">001</div>
<div class="t" style="left:940.5px;top:488px;letter-spacing:-0.745px;">0000000005</div>
<div class="t" style="left:1118.2px;top:488px;letter-spacing:-0.688px;">2</div>
<div class="a" style="left:781px;top:653px;width:75px;height:23px;background:#CCCCCC;border:1px solid #BFBFBF;"></div>
<div class="a" style="left:858px;top:653px;width:75px;height:23px;background:#CCCCCC;border:1px solid #BFBFBF;"></div>
<div class="a" style="left:935px;top:653px;width:75px;height:23px;background:#E1E1E1;border:1px solid #ADADAD;"></div>
<div class="a" style="left:1012px;top:653px;width:75px;height:23px;background:#E1E1E1;border:1px solid #ADADAD;"></div>
<div class="a" style="left:1089px;top:653px;width:75px;height:23px;background:#E1E1E1;border:1px solid #ADADAD;"></div>
<div class="a" style="left:1166px;top:653px;width:75px;height:23px;background:#E1E1E1;border:1px solid #ADADAD;"></div>
<div class="a" style="left:1243px;top:653px;width:75px;height:23px;background:#E1E1E1;border:1px solid #ADADAD;"></div>
<div class="a" style="left:1320px;top:653px;width:75px;height:23px;background:#CCCCCC;border:1px solid #BFBFBF;"></div>
<div class="a" style="left:1397px;top:653px;width:75px;height:23px;background:#CCCCCC;border:1px solid #BFBFBF;"></div>
<div class="a" style="left:1474px;top:653px;width:73px;height:23px;background:#E1E1E1;border:1px solid #ADADAD;"></div>
<svg class="a" style="left:810px;top:656px" width="17" height="17" viewBox="0 0 17 17"><path d="M2 1 V16" stroke="#505050" stroke-width="1.6"/><path d="M3.5 8.5 L10 2 V5.5 H15.5 V11.5 H10 V15Z" fill="#BDBDBD" stroke="#5A5A5A" stroke-width="1"/></svg>
<svg class="a" style="left:887px;top:656px" width="17" height="17" viewBox="0 0 17 17"><path d="M1.5 8.5 L8 2 V5.5 H15.5 V11.5 H8 V15Z" fill="#BDBDBD" stroke="#606060" stroke-width="1"/></svg>
<svg class="a" style="left:964px;top:656px" width="17" height="17" viewBox="0 0 17 17"><defs><linearGradient id="ga" x1="0" y1="0" x2="0" y2="1"><stop offset="0" stop-color="#9BE060"/><stop offset="1" stop-color="#3C9A14"/></linearGradient></defs><path d="M15.5 8.5 L9 2 V5.5 H1.5 V11.5 H9 V15Z" fill="url(#ga)" stroke="#2D7010" stroke-width="1"/></svg>
<svg class="a" style="left:1041px;top:656px" width="17" height="17" viewBox="0 0 17 17"><path d="M15 1 V16" stroke="#2D7010" stroke-width="1.6"/><path d="M13.5 8.5 L7 2 V5.5 H1.5 V11.5 H7 V15Z" fill="url(#ga)" stroke="#2D7010" stroke-width="1"/></svg>
<svg class="a" style="left:1118px;top:656px" width="17" height="17" viewBox="0 0 17 17"><path d="M7 2.5 H10 V7 H14.5 V10 H10 V14.5 H7 V10 H2.5 V7 H7Z" fill="#C8E0FF" stroke="#2A64C8" stroke-width="1"/></svg>
<svg class="a" style="left:1195px;top:656px" width="17" height="17" viewBox="0 0 17 17"><rect x="2.5" y="2.5" width="12" height="3.5" rx="1" fill="#B4C860" stroke="#4A5A18" stroke-width="0.9"/><path d="M3.5 6 V15.5 H13.5 V6Z" fill="#A8C048" stroke="#4A5A18" stroke-width="0.9"/><circle cx="8.5" cy="10.5" r="2" fill="none" stroke="#E8F0C0" stroke-width="0.8"/></svg>
<svg class="a" style="left:1272px;top:656px" width="17" height="17" viewBox="0 0 17 17"><path d="M2.5 15 L3.5 11.5 L12.5 2.5 L15 5 L6 14Z" fill="#E8A830" stroke="#6A4810" stroke-width="0.8"/><path d="M12 3 L14.5 5.5" stroke="#E02020" stroke-width="2.2"/></svg>
<svg class="a" style="left:1349px;top:656px" width="17" height="17" viewBox="0 0 17 17"><path d="M2.5 8.5 L6.5 12.5 L14.5 4.5" fill="none" stroke="#8A8A8A" stroke-width="2.6"/></svg>
<svg class="a" style="left:1426px;top:656px" width="17" height="17" viewBox="0 0 17 17"><path d="M7 2.5 L2.5 7 L7 11.5 V8.5 Q12 8.5 13 14.5 Q14.5 6 7 5.5Z" fill="#E4E4E4" stroke="#9A9A9A" stroke-width="0.9"/></svg>
<svg class="a" style="left:1502px;top:656px" width="17" height="17" viewBox="0 0 17 17"><path d="M3 7.5 A5.5 5.5 0 0 1 12.5 4.5 L14 3 V7.5 H9.5 L11 6 A3.8 3.8 0 0 0 5 7.5Z M14 9.5 A5.5 5.5 0 0 1 4.5 12.5 L3 14 V9.5 H7.5 L6 11 A3.8 3.8 0 0 0 12 9.5Z" fill="#3A7AE0" stroke="#1A4AA0" stroke-width="0.6"/></svg>
<div class="t" style="left:1065.1px;top:682px;font-weight:bold;letter-spacing:0.506px;">1 - Produção,   2 - Homologação</div>
<div class="a" style="left:268px;top:716px;width:499px;height:74px;border:1px solid #DCDCDC;border-bottom:none;"></div>
<div class="a" style="left:275px;top:713px;width:34px;height:7px;background:#FFFFFF;"></div>
<div class="t" style="left:277.7px;top:710px;letter-spacing:-0.636px;">NFCe</div>
<svg class="a" style="left:286px;top:730px" width="13" height="13" viewBox="0 0 13 13"><rect x="0.5" y="0.5" width="12" height="12" fill="#fff" stroke="#333333"/><path d="M2.5 6.5 L5 9 L10.5 3.2" fill="none" stroke="#333333" stroke-width="1.3"/></svg>
<div class="t" style="left:302.4px;top:730px;letter-spacing:-0.062px;">Imprimir Segunda Via ao emitir NFCe em Contingência</div>
<div class="a" style="left:773px;top:716px;width:787px;height:43px;border:1px solid #DCDCDC;"></div>
<div class="a" style="left:779px;top:713px;width:27px;height:7px;background:#FFFFFF;"></div>
<div class="t" style="left:781.6px;top:710px;letter-spacing:-1.115px;">MFE</div>
<svg class="a" style="left:784px;top:730px" width="13" height="13" viewBox="0 0 13 13"><rect x="0.5" y="0.5" width="12" height="12" fill="#fff" stroke="#333333"/><path d="M2.5 6.5 L5 9 L10.5 3.2" fill="none" stroke="#333333" stroke-width="1.3"/></svg>
<div class="t" style="left:800.1px;top:730px;letter-spacing:-0.251px;">Verificar Status Pagamento no VFP-e para vendas com POS</div>
<div class="a" style="left:773px;top:778px;width:787px;height:22px;border:1px solid #DCDCDC;border-bottom:none;"></div>
<div class="a" style="left:779px;top:775px;width:421px;height:7px;background:#FFFFFF;"></div>
<div class="t" style="left:781.6px;top:771px;letter-spacing:-0.101px;">NFe (Parâmetros válidos apenas para NFe de Ajuste/Complemento/Devolução)</div>
<div class="a" style="left:260px;top:787px;width:1318px;height:1px;background:#FFFFFF;"></div>
<div class="a" style="left:259px;top:788px;width:1320px;height:1px;background:#D9D9D9;"></div>
<div class="a" style="left:256px;top:789px;width:1326px;height:3px;background:#FFFFFF;"></div>
<div class="a" style="left:255px;top:792px;width:1328px;height:1px;background:#D9D9D9;"></div>
<div class="a" style="left:255px;top:793px;width:1331px;height:29px;background:#F3F6FB;"></div>
<div class="a" style="left:1394px;top:796px;width:78px;height:24px;background:#E1E1E1;border:1px solid #ADADAD;"></div>
<svg class="a" style="left:1406px;top:800px" width="17" height="15" viewBox="0 0 17 15"><defs><linearGradient id="cg" x1="0" y1="0" x2="0" y2="1"><stop offset="0" stop-color="#B8F080"/><stop offset="1" stop-color="#3A9A10"/></linearGradient></defs><path d="M0.6 7.8 L3.2 5.2 L6.3 8.4 L13.4 1.2 L16 3.8 L6.3 14.2Z" fill="url(#cg)" stroke="#1E5A08" stroke-width="0.9" stroke-linejoin="round"/></svg>
<div class="t" style="left:1426.7px;top:801px;letter-spacing:-0.531px;">Gravar</div>
<div class="a" style="left:1484px;top:796px;width:90px;height:24px;background:#E1E1E1;border:1px solid #ADADAD;"></div>
<svg class="a" style="left:1495px;top:799px" width="17" height="17" viewBox="0 0 17 17"><path d="M3.2 3.2 L13.8 13.8 M13.8 3.2 L3.2 13.8" stroke="#8A0010" stroke-width="5.4" stroke-linecap="round"/><path d="M3.2 3.2 L13.8 13.8 M13.8 3.2 L3.2 13.8" stroke="#F02838" stroke-width="3.8" stroke-linecap="round"/><path d="M3 2.6 L8.5 8 M14 2.6 L8.5 8" stroke="#FF8090" stroke-width="1" stroke-linecap="round" opacity="0.7"/></svg>
<div class="t" style="left:1516.7px;top:801px;letter-spacing:-0.341px;">Cancelar</div>
</body></html>
